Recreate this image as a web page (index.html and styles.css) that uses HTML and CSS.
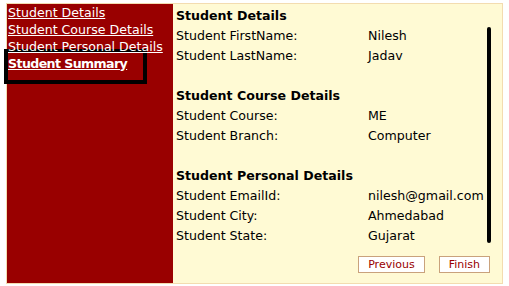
FILE: index.html
```html
<!DOCTYPE html>
<html lang="en">
<head>
  <meta charset="UTF-8">
  <meta name="viewport" content="width=device-width, initial-scale=1.0">
  <title>Student Summary</title>
  <link rel="stylesheet" href="styles.css">
</head>
<body>
  <div class="wizard">
    <ul class="steps">
      <li><a href="#">Student Details</a></li>
      <li><a href="#">Student Course Details</a></li>
      <li><a href="#">Student Personal Details</a></li>
      <li class="active"><a href="#">Student Summary</a></li>
    </ul>

    <div class="summary">
      <h3>Student Details</h3>
      <div class="summary-body">
        <div class="details">
          <div class="row"><span class="label">Student FirstName:</span><span>Nilesh</span></div>
          <div class="row"><span class="label">Student LastName:</span><span>Jadav</span></div>

          <h3 class="spaced">Student Course Details</h3>
          <div class="row"><span class="label">Student Course:</span><span>ME</span></div>
          <div class="row"><span class="label">Student Branch:</span><span>Computer</span></div>

          <h3 class="spaced">Student Personal Details</h3>
          <div class="row"><span class="label">Student EmailId:</span><span>nilesh@gmail.com</span></div>
          <div class="row"><span class="label">Student City:</span><span>Ahmedabad</span></div>
          <div class="row"><span class="label">Student State:</span><span>Gujarat</span></div>
        </div>
        <div class="bar"></div>
      </div>

      <div class="buttons">
        <button type="button">Previous</button>
        <button type="button">Finish</button>
      </div>
    </div>
  </div>
</body>
</html>
```

FILE: styles.css
```css
body {
  margin: 0;
  background: #fff;
  font-family: "DejaVu Sans", Verdana, sans-serif;
  font-size: 12.6px;
}

.wizard {
  display: flex;
  margin: 3px 6px;
  width: 495px;
  height: 279px;
  border: 1px solid #f3dcb0;
  background: #fffad4;
}

.steps {
  width: 165px;
  margin: 0;
  padding: 0 0 0 1px;
  list-style: none;
  background: #990000;
  line-height: 17px;
}

.steps a {
  color: #fff;
}

.steps li.active {
  box-sizing: border-box;
  width: 143px;
  margin: -6px 0 0 -4px;
  padding: 2px 0 8px 0;
  border: 4px solid #000;
  font-weight: bold;
  letter-spacing: -0.6px;
}

.summary {
  flex: 1;
  padding: 2px 0 0 3px;
  line-height: 20px;
}

.summary h3 {
  margin: 0;
  font-size: 12.6px;
}

.summary h3.spaced {
  margin-top: 20px;
}

.summary-body {
  display: flex;
}

.details {
  flex: 1;
}

.row {
  display: flex;
}

.label {
  width: 192px;
}

.bar {
  width: 4px;
  height: 216px;
  margin: 1px 11px 0 0;
  border-radius: 2px;
  background: #000;
}

.buttons {
  display: flex;
  justify-content: flex-end;
  gap: 14px;
  margin: 10px 12px 0 0;
}

.buttons button {
  height: 17px;
  padding: 0 9px;
  border: 1px solid #c9a27c;
  background: #fff;
  color: #990000;
  font-family: "DejaVu Sans", Verdana, sans-serif;
  font-size: 11px;
  line-height: 15px;
}
```
